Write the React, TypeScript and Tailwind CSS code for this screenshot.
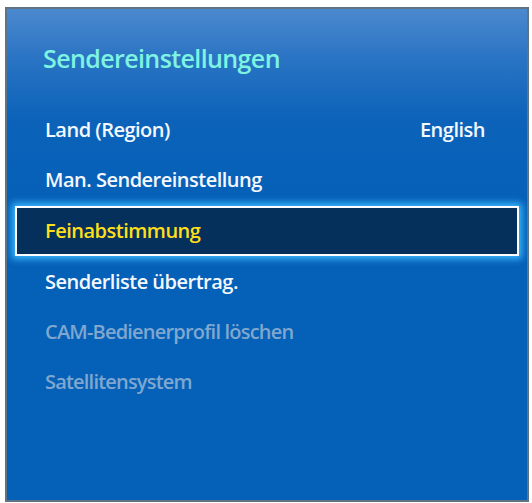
import React from "react";

type Item = { label: string; value?: string; state?: "active" | "disabled" };

const items: Item[] = [
  { label: "Land (Region)", value: "English" },
  { label: "Man. Sendereinstellung" },
  { label: "Feinabstimmung", state: "active" },
  { label: "Senderliste übertrag." },
  { label: "CAM-Bedienerprofil löschen", state: "disabled" },
  { label: "Satellitensystem", state: "disabled" },
];

export default function App() {
  return (
    <div className="w-[532px] h-[503px] bg-white pl-[5px] pt-[7px] font-['Open_Sans',sans-serif]">
      {/* TV menu panel */}
      <div className="w-[524px] h-[495px] border-2 border-[#5f7385] bg-[linear-gradient(180deg,#4b89ce_0%,#2a74c4_10%,#0c63b9_22%,#0560b7_40%,#0560b7_100%)]">
        <h1 className="pl-[36px] pt-[33px] pb-[31px] text-[25px] leading-[32px] font-semibold tracking-[-0.6px] text-[#7ef3e1]">
          Sendereinstellungen
        </h1>

        <ul className="flex flex-col">
          {items.map((item) => {
            const active = item.state === "active";
            const disabled = item.state === "disabled";
            return (
              <li
                key={item.label}
                className={`mx-[8px] h-[50px] flex items-center justify-between border-2 pl-[28px] pr-[32px] text-[20px] font-semibold tracking-[-0.5px] ${
                  active
                    ? "h-[48px] my-[1px] border-white bg-[#06305c] text-[#ffdf1a] shadow-[0_0_7px_3px_#3cb8ff]"
                    : disabled
                      ? "border-transparent text-[#7fa7cf] tracking-[-0.8px]"
                      : "border-transparent text-[#f4f8ff]"
                }`}
              >
                <span>{item.label}</span>
                {item.value && <span>{item.value}</span>}
              </li>
            );
          })}
        </ul>
      </div>
    </div>
  );
}
